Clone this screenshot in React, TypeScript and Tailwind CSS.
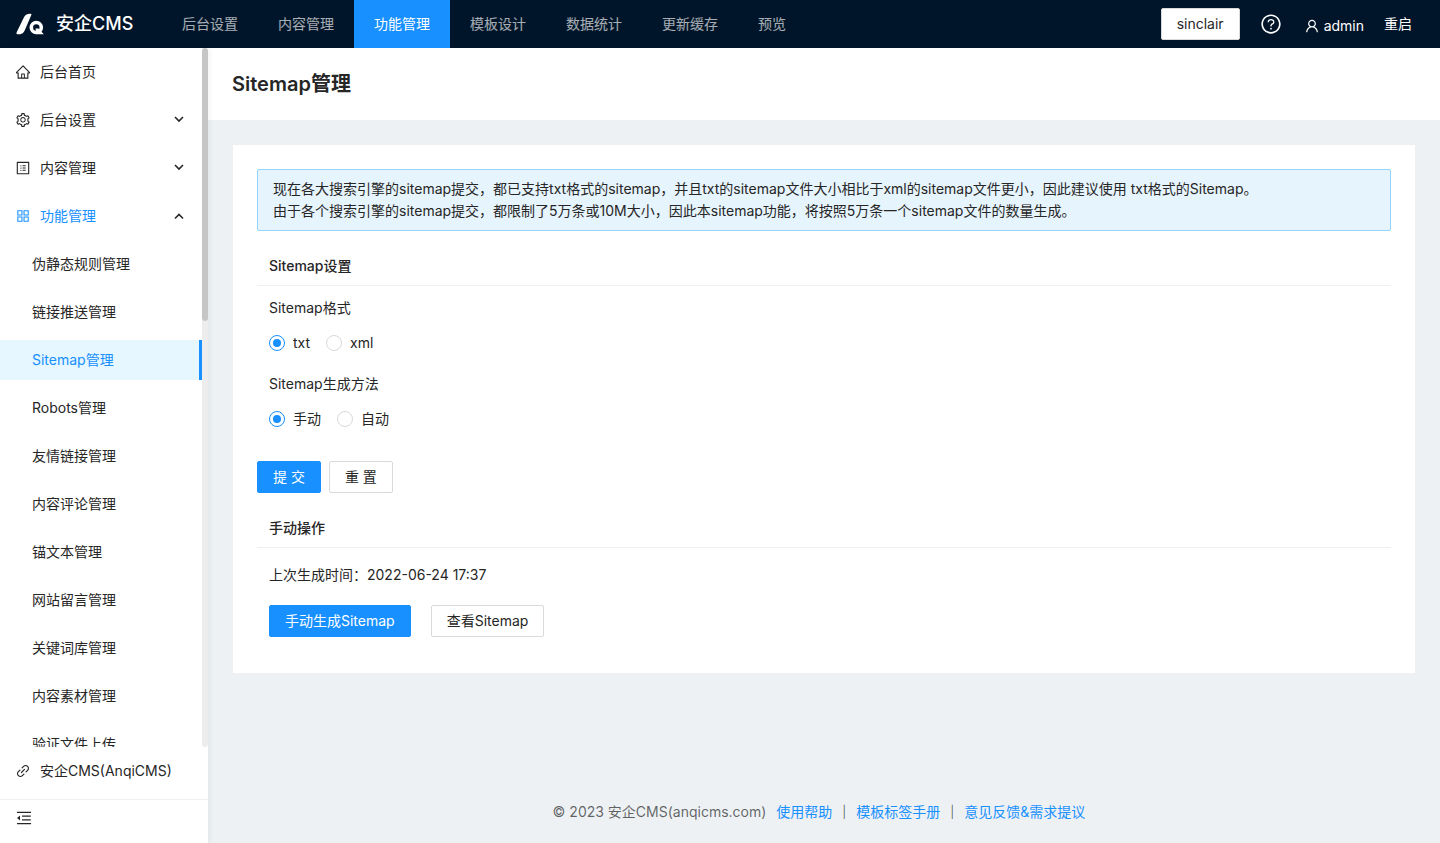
import { useState } from "react";
import {
  AiOutlineAppstore,
  AiOutlineHome,
  AiOutlineLink,
  AiOutlineMenuFold,
  AiOutlineProfile,
  AiOutlineQuestionCircle,
  AiOutlineSetting,
  AiOutlineUser,
} from "react-icons/ai";

const topMenu = ["后台设置", "内容管理", "功能管理", "模板设计", "数据统计", "更新缓存", "预览"];

const sideMenu = [
  { label: "后台首页", Icon: AiOutlineHome },
  { label: "后台设置", Icon: AiOutlineSetting, arrow: "down" },
  { label: "内容管理", Icon: AiOutlineProfile, arrow: "down" },
  { label: "功能管理", Icon: AiOutlineAppstore, arrow: "up" },
];

const subMenu = [
  "伪静态规则管理",
  "链接推送管理",
  "Sitemap管理",
  "Robots管理",
  "友情链接管理",
  "内容评论管理",
  "锚文本管理",
  "网站留言管理",
  "关键词库管理",
  "内容素材管理",
  "验证文件上传",
];

const buttonBase = "h-8 rounded-xs border px-[15px]";
const primaryButton = `${buttonBase} border-[#1890ff] bg-[#1890ff] text-white`;
const defaultButton = `${buttonBase} border-[#d9d9d9] bg-white`;

function Logo() {
  return (
    <svg className="h-7 w-7" viewBox="0 0 28 28" fill="none">
      <path
        d="M15.500 4.500C15.500 4 15 3.800 14 3.800C10.800 3.800 9 5 7.600 8L0.800 22C0 23.600 0.500 24.300 2 24.300C5.600 24.300 7.400 23.200 8.800 20.200Z"
        fill="#fff"
      />
      <circle cx="20.300" cy="17.500" r="5" stroke="#fff" strokeWidth="3.600" />
      <path d="M19.500 18.500H22.500L27.800 24.300H20.500Z" fill="#fff" />
    </svg>
  );
}

function Arrow({ dir }: { dir: string }) {
  return (
    <svg className="ml-auto h-[10px] w-[10px]" viewBox="0 0 10 10" fill="none" stroke="#262626" strokeWidth="1.600">
      <path d={dir === "up" ? "M1 7.500L5 3.500L9 7.500" : "M1 2L5 6L9 2"} />
    </svg>
  );
}

function Header() {
  return (
    <header className="flex h-12 shrink-0 items-center bg-[#001529] pr-7 pl-4 text-white">
      <a href="#" className="flex w-[146px] items-center gap-3">
        <Logo />
        <span className="text-[18px] font-medium whitespace-nowrap">安企CMS</span>
      </a>
      <nav className="flex self-stretch">
        {topMenu.map((label) => (
          <a
            key={label}
            href="#"
            className={
              label === "功能管理"
                ? "flex items-center bg-[#1890ff] px-5 whitespace-nowrap"
                : "flex items-center px-5 whitespace-nowrap text-white/65"
            }
          >
            {label}
          </a>
        ))}
      </nav>
      <div className="ml-auto flex items-center gap-5">
        <button className={`${defaultButton} text-[#262626]`}>sinclair</button>
        <a href="#" aria-label="帮助">
          <AiOutlineQuestionCircle className="h-[22px] w-[22px]" />
        </a>
        <a href="#" className="ml-[2px] flex items-center gap-1 pt-1">
          <AiOutlineUser className="h-4 w-4" />
          admin
        </a>
        <a href="#">重启</a>
      </div>
    </header>
  );
}

function Sidebar() {
  return (
    <aside className="z-10 flex w-52 shrink-0 flex-col bg-white shadow-[2px_0_4px_rgba(29,35,41,0.05)]">
      <div className="flex min-h-0 flex-1">
        <nav className="flex flex-1 flex-col gap-2 overflow-y-auto pt-1 [scrollbar-width:none]">
          {sideMenu.map(({ label, Icon, arrow }) => (
            <a
              key={label}
              href="#"
              className={
                arrow === "up"
                  ? "flex h-10 shrink-0 items-center gap-[9px] pr-[18px] pl-[15px] text-[#1890ff]"
                  : "flex h-10 shrink-0 items-center gap-[9px] pr-[18px] pl-[15px]"
              }
            >
              <Icon className="h-4 w-4" />
              {label}
              {arrow && <Arrow dir={arrow} />}
            </a>
          ))}
          {subMenu.map((label) => (
            <a
              key={label}
              href="#"
              className={
                label === "Sitemap管理"
                  ? "flex h-10 shrink-0 items-center border-r-3 border-[#1890ff] bg-[#e6f7ff] pl-8 text-[#1890ff]"
                  : "flex h-10 shrink-0 items-center pl-8"
              }
            >
              {label}
            </a>
          ))}
        </nav>
        <div className="w-[6px] rounded-full bg-[#ededed]">
          <div className="h-[39%] rounded-full bg-[#c6c6c6]" />
        </div>
      </div>
      <a href="#" className="my-1 flex h-10 items-center gap-[9px] pl-[15px]">
        <AiOutlineLink className="h-4 w-4" />
        安企CMS(AnqiCMS)
      </a>
      <button className="mt-1 flex h-11 items-center border-t border-[#f0f0f0] pb-2 pl-[15px]" aria-label="收起菜单">
        <AiOutlineMenuFold className="h-[18px] w-[18px]" />
      </button>
    </aside>
  );
}

type RadioFieldProps = {
  name: string;
  label: string;
  options: string[];
};

function RadioField({ name, label, options }: RadioFieldProps) {
  const [value, setValue] = useState(options[0]);

  return (
    <fieldset className="px-3 pb-[6px]">
      <legend className="h-11 leading-[44px]">{label}</legend>
      <div className="flex h-[26px] items-center gap-4">
        {options.map((option) => (
          <label key={option} className="flex items-center gap-2">
            <input
              type="radio"
              name={name}
              checked={value === option}
              onChange={() => setValue(option)}
              className="h-4 w-4 appearance-none rounded-full border border-[#d9d9d9] bg-white checked:border-[#1890ff] checked:bg-[#1890ff] checked:bg-clip-content checked:p-[3px]"
            />
            {option}
          </label>
        ))}
      </div>
    </fieldset>
  );
}

function SectionTitle({ children }: { children: string }) {
  return <h2 className="mt-4 border-b border-[#f0f0f0] px-3 py-2 font-medium">{children}</h2>;
}

function SitemapCard() {
  return (
    <section className="m-6 border border-[#f0f0f0] bg-white px-6 pt-6 pb-9">
      <div className="rounded-xs border border-[#91d5ff] bg-[#e6f4fd] px-[15px] py-2">
        <p>
          现在各大搜索引擎的sitemap提交，都已支持txt格式的sitemap，并且txt的sitemap文件大小相比于xml的sitemap文件更小，因此建议使用
          txt格式的Sitemap。
        </p>
        <p>由于各个搜索引擎的sitemap提交，都限制了5万条或10M大小，因此本sitemap功能，将按照5万条一个sitemap文件的数量生成。</p>
      </div>
      <form onSubmit={(e) => e.preventDefault()}>
        <SectionTitle>Sitemap设置</SectionTitle>
        <RadioField name="format" label="Sitemap格式" options={["txt", "xml"]} />
        <RadioField name="method" label="Sitemap生成方法" options={["手动", "自动"]} />
        <div className="mt-[23px] flex gap-2">
          <button className={primaryButton}>提 交</button>
          <button type="reset" className={defaultButton}>
            重 置
          </button>
        </div>
      </form>
      <SectionTitle>手动操作</SectionTitle>
      <div className="px-3 pt-4">
        <p>上次生成时间：2022-06-24 17:37</p>
        <div className="mt-[19px] flex gap-5">
          <button className={primaryButton}>手动生成Sitemap</button>
          <button className={defaultButton}>查看Sitemap</button>
        </div>
      </div>
    </section>
  );
}

function Footer() {
  return (
    <footer className="mt-auto flex justify-center gap-[10px] pr-[10px] pb-5 text-black/60">
      <span>© 2023 安企CMS(anqicms.com)</span>
      <a href="#" className="text-[#1890ff]">
        使用帮助
      </a>
      <span className="text-[12px]">|</span>
      <a href="#" className="text-[#1890ff]">
        模板标签手册
      </a>
      <span className="text-[12px]">|</span>
      <a href="#" className="text-[#1890ff]">
        意见反馈&amp;需求提议
      </a>
    </footer>
  );
}

function App() {
  return (
    <div
      lang="zh-CN"
      className="flex h-screen flex-col bg-[#edf1f4] font-[Inter,'Noto_Sans_CJK_SC',sans-serif] text-[14px] leading-[22px] text-[#262626]"
    >
      <Header />
      <div className="flex min-h-0 flex-1">
        <Sidebar />
        <main className="flex min-w-0 flex-1 flex-col overflow-auto">
          <h1 className="bg-white px-6 py-5 text-[20px] leading-8 font-semibold">Sitemap管理</h1>
          <SitemapCard />
          <Footer />
        </main>
      </div>
    </div>
  );
}

export default App;
